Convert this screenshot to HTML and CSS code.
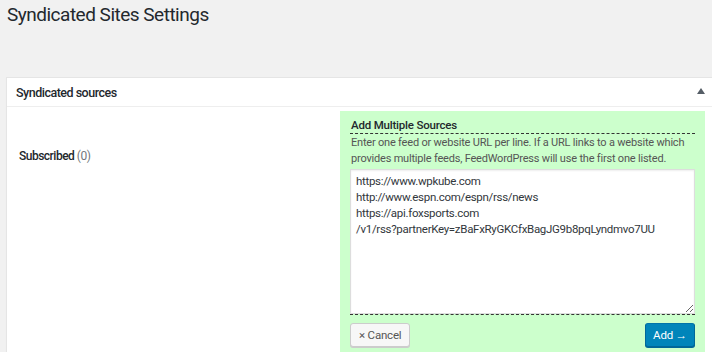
FILE: index.html
```html
<!DOCTYPE html>
<html lang="en">
<head>
    <meta charset="UTF-8">
    <title>Syndicated Sites Settings</title>
    <link rel="stylesheet" href="styles.css">
</head>
<body>
    <div class="wrap">
        <h1>Syndicated Sites Settings</h1>

        <div class="postbox">
            <div class="postbox-header">
                <h2>Syndicated sources</h2>
                <svg class="toggle" width="8" height="6" viewBox="0 0 8 6"><path d="M4 0 L8 6 L0 6 Z" fill="#555d66"/></svg>
            </div>
            <div class="inside">
                <div class="row">
                    <div class="label"><strong>Subscribed</strong> <span class="count">(0)</span></div>
                    <div class="multiadd">
                        <h3>Add Multiple Sources</h3>
                        <p class="desc">Enter one feed or website URL per line. If a URL links to a website which<br>provides multiple feeds, FeedWordPress will use the first one listed.</p>
                        <div class="field">
                            <textarea rows="9" wrap="off">https://www.wpkube.com
http://www.espn.com/espn/rss/news
https://api.foxsports.com
/v1/rss?partnerKey=zBaFxRyGKCfxBagJG9b8pqLyndmvo7UU</textarea>
                        </div>
                        <div class="actions">
                            <a href="#" class="button">&times; Cancel</a>
                            <a href="#" class="button button-primary">Add &rarr;</a>
                        </div>
                    </div>
                </div>
            </div>
        </div>
    </div>
</body>
</html>
```

FILE: styles.css
```css
* {
    box-sizing: border-box;
}
body {
    margin: 0;
    background: #f1f1f1;
    color: #23282d;
    font-family: Roboto, "Open Sans", sans-serif;
    font-size: 12px;
    overflow: hidden;
}
.wrap {
    padding: 0 0 0 6px;
}
h1 {
    font-size: 19px;
    font-weight: 400;
    letter-spacing: -0.5px;
    margin: 0;
    padding: 2px 1px 0;
    line-height: 26px;
    height: 77px;
}
.postbox {
    background: #fff;
    border: 1px solid #e5e5e5;
    border-right: none;
    margin-right: -20px;
    box-shadow: 0 1px 1px rgba(0,0,0,0.04);
}
.postbox-header {
    display: flex;
    align-items: center;
    height: 29px;
    padding: 0 9px;
    border-bottom: 1px solid #eee;
}
.postbox-header h2 {
    flex: 1;
    margin: 0;
    font-size: 12.5px;
    font-weight: 500;
    letter-spacing: -0.5px;
}
.toggle {
    display: block;
    margin: 0 18px 2px 0;
}
.inside {
    padding: 4px 0 0 9px;
}
.row {
    display: flex;
    border-bottom: 1px solid #eee;
}
.label {
    width: 324px;
    padding: 38px 0 0 3px;
    font-size: 12px;
    letter-spacing: -0.5px;
}
.label strong {
    font-weight: 500;
}
.count {
    color: #72777c;
}
.multiadd {
    width: 365px;
    background: #ccffcc;
    padding: 7px 10px 6px 10px;
}
.multiadd h3 {
    margin: 0;
    font-size: 11.5px;
    font-weight: 500;
    letter-spacing: -0.2px;
    line-height: 15px;
    padding: 0 1px;
    border-bottom: 1px dashed #333;
    color: #23282d;
}
.desc {
    margin: 0;
    padding: 1px 1px 0;
    font-size: 11px;
    letter-spacing: -0.2px;
    line-height: 16px;
    color: #555;
    white-space: nowrap;
}
.field {
    margin-top: 2px;
    border-bottom: 1px dashed #333;
}
textarea {
    display: block;
    width: 100%;
    height: 145px;
    margin: 0;
    padding: 3px 5px;
    border: 1px solid #ddd;
    font-family: Roboto, "Open Sans", sans-serif;
    font-size: 11.5px;
    letter-spacing: -0.3px;
    line-height: 16px;
    color: #32373c;
    background: #fff;
    resize: vertical;
    overflow: hidden;
    box-shadow: inset 0 1px 2px rgba(0,0,0,0.07);
}
.actions {
    display: flex;
    justify-content: space-between;
    margin-top: 8px;
}
.button {
    display: inline-block;
    height: 24px;
    line-height: 22px;
    padding: 0 8px;
    border: 1px solid #ccc;
    border-radius: 3px;
    background: #f7f7f7;
    color: #555;
    text-decoration: none;
    font-size: 11.5px;
    letter-spacing: -0.2px;
    box-shadow: 0 1px 0 #ccc;
}
.button-primary {
    width: 50px;
    text-align: center;
    padding: 0;
    background: #0085ba;
    border-color: #0073aa #006799 #006799;
    color: #fff;
    box-shadow: 0 1px 0 #006799;
}
```
